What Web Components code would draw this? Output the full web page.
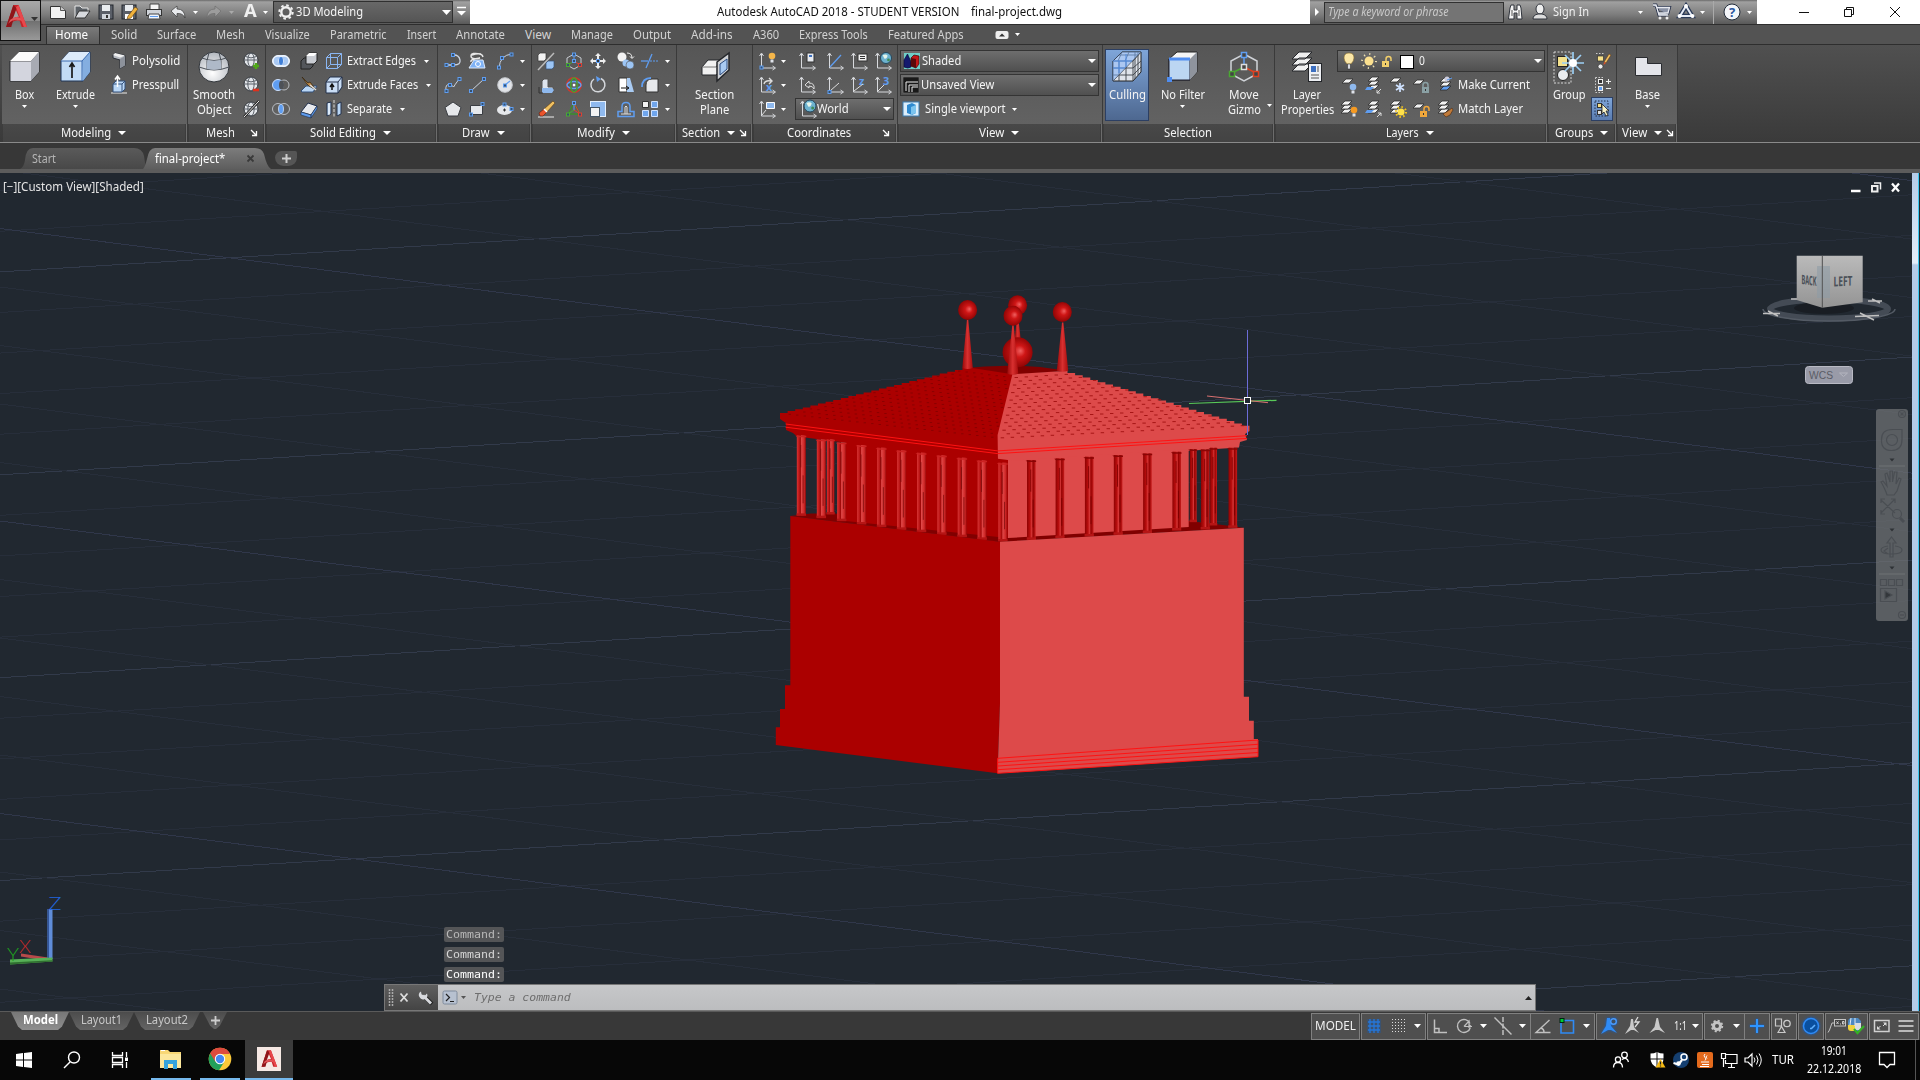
<!DOCTYPE html>
<html lang="en">
<head>
<meta charset="utf-8">
<title>Autodesk AutoCAD 2018</title>
<style>
html,body{margin:0;padding:0;background:#000;overflow:hidden}
body{width:1920px;height:1080px;font:12px/16px "Noto Sans","Open Sans",sans-serif;color:#f0f0f0}
</style>
</head>
<body>
<cad-app></cad-app>
<script>
const G='#d8dade', B='#5f9df0', L='#b9d6f5', K='#2b2f36';
const AX=`<path d="M6.500 5v14h13M4.500 7l2-3 2 3M17.500 17l3 2-3 2" fill="none" stroke="${G}"/>`;
const globe=(x,y,r)=>`<circle cx="${x}" cy="${y}" r="${r}" fill="#e3e6ea" stroke="#33373c"/><path d="M${x-r} ${y}h${2*r}M${x-r*.8} ${y-r*.5}q${r*.8} ${r*.4} ${r*1.6} 0" fill="none" stroke="#5a6068"/><ellipse cx="${x}" cy="${y}" rx="${r*.45}" ry="${r}" fill="none" stroke="#5a6068"/>`;
const earth=(x,y,r)=>`<circle cx="${x}" cy="${y}" r="${r}" fill="#6db2cf" stroke="#24455a"/><path d="M${x-r*.6} ${y-r*.5}q${r*.6} -${r*.3} ${r*.9} ${r*.1}q-${r*.2} ${r*.7} -${r*.6} ${r*.5}z" fill="#e4f4ea"/><circle cx="${x+r*.45}" cy="${y+r*.35}" r="${r*.25}" fill="#3f8b57"/>`;
const lay=(x,y,c='#f2f2f2')=>`<path d="M${x+4} ${y}h7l-4 4h-7z" fill="${c}" stroke="#2c2c2c" stroke-width=".8"/>`;
const stack=(x,y,c='#f2f2f2')=>lay(x,y+8,c)+lay(x,y+4)+lay(x,y);
const sq=(x,y,c=B)=>`<rect x="${x-1.5}" y="${y-1.5}" width="3" height="3" fill="#35506f" stroke="${c}"/>`;
const bulb=(x,y,c)=>`<circle cx="${x}" cy="${y}" r="3.300" fill="${c}"/><path d="M${x-1.5} ${y+3.500}h3v3h-3z" fill="#dfe3ea"/>`;
const lockp=(x,y,c,o=0)=>`<path d="M${x+(o?4:1)} ${y}v-2q0-2.500 2.500-2.500t2.500 2.500v2" fill="none" stroke="${c}" stroke-width="1.500"/><rect x="${x}" y="${y}" width="7" height="6" fill="${c}"/><path d="M${x+3.500} ${y+2}v2" stroke="#333"/>`;
const LOGO=`<path d="M2 22L9 1h5l8 21h-5l-2-6q-4-1-8 2l-1.500 4z" fill="#c62328"/><path d="M2 22L9 1l3 3-5 18z" fill="#8f1519"/><path d="M8.500 14q3-2 5.800-1.600L11.500 6z" fill="var(--hole,#9b9b9b)"/><path d="M4 19q7-7 16-1l-1-3Q12 10 6 15z" fill="#e0565a"/><path d="M14 1l8 21h-3L11.500 3z" fill="#e8484c"/>`;
const ICONS={
 new:`<path d="M4.500 6.500h10l5 4v8h-15z" fill="#f3f3f3" stroke="#333"/><path d="M14.500 6.500v4h5" fill="#ccc" stroke="#555"/>`,
 open:`<path d="M5 18V6h5l2 2h6v3" fill="#5d6268" stroke="#e8e8e8"/><path d="M5 18l4-7h11l-5 7z" fill="#d8dade" stroke="#333"/>`,
 save:`<rect x="5" y="5" width="14" height="14" fill="#5a5f68" stroke="#22262c"/><rect x="8" y="5" width="8" height="6" fill="#e9ecef"/><path d="M8 14h8v5H8z" fill="#cfd4da"/><path d="M13 15v3" stroke="#333" stroke-width="2"/>`,
 saveas:`<rect x="4" y="5" width="14" height="14" fill="#5a5f68" stroke="#22262c"/><rect x="7" y="5" width="8" height="6" fill="#e9ecef"/><path d="M7 14h8v5H7z" fill="#fff"/><path d="M10 16l7-9 3 2-7 9-4 1z" fill="#f0b23c" stroke="#5a3a10" stroke-width=".6"/>`,
 print:`<path d="M8 4h9v6H8z" fill="#f5f5f5" stroke="#444"/><rect x="4.500" y="9.500" width="15" height="6" fill="#d0d4da" stroke="#333"/><path d="M7 14h10l1 5H6z" fill="#eef5ff" stroke="#444"/><path d="M8 16.500h8" stroke="${B}"/>`,
 undo:`<path d="M5 11l6-5v3q8 0 8 9-2-5-8-4.500V17z" fill="#e9ebee" stroke="#3a3a3a" stroke-width=".7"/>`,
 redo:`<path d="M19 11l-6-5v3q-8 0-8 9 2-5 8-4.500V17z" fill="#9c9c9c" stroke="#6a6a6a" stroke-width=".6"/>`,
 gear:`<circle cx="12" cy="12" r="4.700" fill="none" stroke="#f0f0f0" stroke-width="2.400"/><circle cx="12" cy="12" r="6.700" fill="none" stroke="#f0f0f0" stroke-width="2" stroke-dasharray="2.600 2.660"/>`,
 over:`<path d="M8 7.500h9" stroke="#fff" stroke-width="1.500"/><path d="M8 11h9l-4.500 4.500z" fill="#fff"/>`,
 binoc:`<path d="M6 8l1-3h3v5h3V5h3l1 3 1 11h-5v-6h-3v6H4.500z" fill="#f4f4f4" stroke="#30343c"/><path d="M8 10v6M15 10v6" stroke="#555"/>`,
 user:`<ellipse cx="12" cy="9" rx="4" ry="5" fill="#eee" stroke="#30343c"/><path d="M5 19q0-4 5-5h4q5 1 5 5z" fill="#ddd" stroke="#30343c"/>`,
 cart:`<path d="M3 5h3l3 10h9M6.500 7.500h13L18 13H8" fill="#7d869b" stroke="#26304a" stroke-width="3"/><path d="M3 5h3l3 10h9M6.500 7.500h13L18 13H8" fill="#8b93a6" stroke="#e8eaf0" stroke-width="1.300"/><circle cx="10" cy="18" r="1.500" fill="#eee"/><circle cx="17" cy="18" r="1.500" fill="#eee"/>`,
 a360:`<path d="M12 6l6 10H6z" fill="none" stroke="#2a3a58" stroke-width="4.500"/><path d="M12 6l6 10H6z" fill="none" stroke="#e6ebf5" stroke-width="2"/><circle cx="12" cy="6" r="2" fill="#fff"/><circle cx="5.500" cy="16" r="2" fill="#fff"/><circle cx="18.500" cy="16" r="2" fill="#fff"/>`,
 help:`<circle cx="12" cy="12" r="8" fill="#f4f6fa" stroke="#222c3a"/><text x="12" y="16.500" font-size="13" font-weight="700" text-anchor="middle" fill="#2a57a0">?</text>`,
 min:`<path d="M7 12.500h10" stroke="#111"/>`,
 rest:`<path d="M7.500 9.500h7v7h-7zM9.500 9.500v-2h7v7h-2" fill="none" stroke="#111"/>`,
 close:`<path d="M7 7l10 10M17 7L7 17" stroke="#111"/>`,
 polysolid:`<path d="M6 6l2-2 10 2.500v10l-5 3V11L6 9z" fill="#b9bdc4" stroke="${K}"/><path d="M6 6l2-2 10 2.500-5 2z" fill="#f1f1f1"/><path d="M13 10l5-3v9.500l-5 3z" fill="#8d929b"/>`,
 presspull:`<path d="M4 20h16" stroke="#eee"/><path d="M6 11l3-3h9v8l-3 3H6z" fill="${L}" stroke="#33507a"/><path d="M6 11h9v8M15 11l3-3" fill="none" stroke="#33507a"/><path d="M10.500 14V4M8 6.500L10.500 3 13 6.500" fill="none" stroke="#fff" stroke-width="1.500"/>`,
 mplus:globe(12,11,7)+`<path d="M17 14v6M14 17h6" stroke="#4fa818" stroke-width="2.600"/>`,
 mminus:globe(12,11,7)+`<path d="M14 17h6" stroke="#e0301c" stroke-width="2.600"/>`,
 mnone:globe(12,12,7)+`<path d="M5 20L20 4" stroke="#222" stroke-width="2.500"/><path d="M5 20L20 4" stroke="#eee"/>`,
 union:`<path d="M9 6.500h6a5.500 5.500 0 0 1 0 11H9a5.500 5.500 0 0 1 0-11z" fill="#a9c9f4" stroke="#e3efff"/><circle cx="9" cy="12" r="5" fill="none" stroke="#fff"/><circle cx="15" cy="12" r="5" fill="none" stroke="#fff"/><ellipse cx="12" cy="12" rx="2" ry="4" fill="#3f7fd8"/>`,
 subtract:`<circle cx="15" cy="12" r="5" fill="none" stroke="#b8bcc2"/><circle cx="9" cy="12" r="5.500" fill="#5f9df0" stroke="#cfe2ff"/><ellipse cx="12.500" cy="12" rx="2.500" ry="4.500" fill="#4d5157"/>`,
 intersect:`<circle cx="9" cy="12" r="5.500" fill="none" stroke="#b8bcc2"/><circle cx="15" cy="12" r="5.500" fill="none" stroke="#b8bcc2"/><ellipse cx="12" cy="12" rx="2.400" ry="4.700" fill="#5f9df0" stroke="#cfe2ff" stroke-width=".6"/>`,
 sliceblk:`<path d="M4 12l3-3h9v8l-3 3H4z" fill="#53565b" stroke="#222"/><path d="M9 7l3-3h8v8l-3 3H9z" fill="#c9ccd2" stroke="#222"/><path d="M9 7h8l3-3h-8z" fill="#fff"/>`,
 slice:`<path d="M4 18l5-5h11l-4 6H5z" fill="${L}" stroke="#33507a"/><path d="M5 4l6 6 2-1 6 8-7-4-2-2z" fill="#c08a48" stroke="#3a2a12" stroke-width=".8"/><path d="M13 12l6 5" stroke="#ddd" stroke-width="1.500"/>`,
 thicken:`<path d="M4 15l7-9 9 3-6 9z" fill="#e8eaee" stroke="#22304a"/><path d="M4 15l10 3v3L4 18zM14 18l6-9v3l-6 9z" fill="${B}" stroke="#22304a" stroke-width=".6"/>`,
 xedges:`<path d="M4.500 8.500h11v11h-11zM8.500 4.500h11v11h-11zM4.500 8.500l4-4M15.500 8.500l4-4M15.500 19.500l4-4M4.500 19.500l4-4" fill="none" stroke="#8ab6f3"/>`,
 xfaces:`<path d="M4 9l4-5h12v10l-4 6H4z" fill="#c9ddf5" stroke="#22304a"/><path d="M4 9h12v11M16 9l4-5" fill="none" stroke="#22304a"/><path d="M10 17v-5M8 14l2-3 2 3" fill="none" stroke="#111" stroke-width="1.500"/>`,
 separate:`<path d="M5 6l4-1v12l-4 2zM15 7l4-2v12l-4 2z" fill="${L}" stroke="#22304a"/><path d="M7 6v12" stroke="#fff"/><path d="M12 3v18" stroke="#ddd" stroke-dasharray="3 1.500"/>`,
 polyline:`<path d="M5 16h8q7 0 6-5t-6-5" fill="none" stroke="#ccd4e0" stroke-width="1.300"/>${sq(5.500,16)}${sq(12,16)}${sq(12,6)}`,
 helix:`<path d="M16 5q-10-2-10 2t9 2q-10 1-9 4 M7 6q10-3 11 2" fill="none" stroke="#e8e8e8" stroke-width="1.400"/><path d="M4 19l5-8h9l2 8z" fill="#7fb2f5" stroke="#dce9fb"/><circle cx="13" cy="15" r="2.500" fill="none" stroke="#fff"/>`,
 arc:`<path d="M6 19Q7 6 19 5" fill="none" stroke="#ccd4e0"/>${sq(6,18.500)}${sq(9,9)}${sq(18.500,5.500)}`,
 spline:`<path d="M5 18q-1-8 4-6t4 2 6-9" fill="none" stroke="#ccd4e0"/>${sq(5.500,18)}${sq(9,12)}${sq(18.500,6)}`,
 line:`<path d="M6 18L19 6" stroke="#ccd4e0"/>${sq(6,18)}${sq(19,6)}`,
 circle:`<circle cx="12" cy="12" r="7.300" fill="#e2e4e8" stroke="#c5c8cd"/><path d="M12 12l5-4" stroke="${B}" stroke-width="1.300"/>${sq(12,12.500)}`,
 polygon:`<path d="M12 5l8 5.500-3 8.500H7l-3-8.500z" fill="#e6e8eb" stroke="#3a3d42"/>`,
 rect:`<path d="M5.500 8.500h12v9h-12z" fill="#e6e8eb" stroke="#3a3d42"/>${sq(6,17.500)}${sq(17.500,7)}`,
 ellipse:`<ellipse cx="11.500" cy="13" rx="7.500" ry="5" fill="#e6e8eb"/><path d="M10 13h3M11.500 11.500v3" stroke="#333"/>${sq(18.500,12)}${sq(11.500,7.500)}`,
 m1:`<path d="M4 21L20 4" stroke="#bbb" stroke-width="1.500"/><path d="M4 6l2-2h6v6l-2 2H4z" fill="#f2f2f2" stroke="#333" stroke-width=".7"/><path d="M12 14l2-2h6v6l-2 2h-6z" fill="#9cc5f5" stroke="#33507a" stroke-width=".7"/>`,
 m2:`<path d="M12 5l7 4v7l-7 4-7-4V9z" fill="none" stroke="#c8ccd2"/><path d="M12 12V5" stroke="${B}"/><path d="M12 12l-6 4" stroke="#4aa832"/><path d="M12 12l6 4" stroke="#e04030"/>${sq(12,5.500)}${sq(6,16,'#4aa832')}${sq(18,16,'#e04030')}${sq(12,12)}`,
 m3:`<path d="M12 4l3 3h-2v3h-2V7H9zM12 20l3-3h-2v-3h-2v3H9zM4 12l3-3v2h3v2H7v2zM20 12l-3-3v2h-3v2h3v2z" fill="#eee"/><rect x="10.500" y="10.500" width="3" height="3" fill="#333" stroke="${B}"/>`,
 m4:`<circle cx="8" cy="8" r="4.500" fill="#f2f2f2"/><circle cx="12" cy="14" r="3.500" fill="#9cc5f5"/><circle cx="16" cy="16" r="4" fill="#9cc5f5" stroke="#555" stroke-width=".6"/><path d="M13 4q5 0 5 5M16 7.500l2 2 2-2" fill="none" stroke="#eee"/>`,
 m5:`<path d="M3 12h7" stroke="${B}" stroke-width="1.300"/><path d="M12 12h9" stroke="${B}" stroke-dasharray="2 1"/><path d="M8 19l6-14" stroke="${B}" stroke-width="1.300"/>`,
 m6:`<path d="M8 8l2-2h4v8h5v5H8z" fill="#dfe5ee" stroke="#555"/><path d="M8 15h10l2 2-2 3H8z" fill="#8fb9ee"/><path d="M5 14v6h4" fill="none" stroke="#333"/>`,
 m7:`<circle cx="12" cy="12" r="7.300" fill="none" stroke="#d0382c" stroke-width="1.500"/><ellipse cx="12" cy="12" rx="7" ry="3.500" fill="none" stroke="${B}" stroke-width="1.500"/><ellipse cx="12" cy="12" rx="3.300" ry="7" fill="none" stroke="#46a02e" stroke-width="1.500"/><rect x="10.800" y="10.800" width="2.500" height="2.500" fill="#fff"/>`,
 m8:`<path d="M15 5.500A7 7 0 1 1 8 6" fill="none" stroke="#d5d8dc" stroke-width="1.500"/><path d="M10 3l5 3-4 3z" fill="${B}"/>`,
 m9:`<path d="M5 5h8v14H5z" fill="#fff" stroke="#333"/><path d="M13 5h3l4 14h-7z" fill="#a9cbf3"/><path d="M7 15h7M12 13l3 2-3 2" stroke="#111" fill="none"/>`,
 m10:`<path d="M8 19v-7q0-6 6-6h6v13z" fill="#e6e8eb" stroke="#333"/><path d="M4 14q0-9 9-9" fill="none" stroke="${B}" stroke-width="1.800"/>`,
 m11:`<path d="M4 20h16" stroke="#eee"/><path d="M10 12l9-8 2 2-8 9z" fill="#f0c060" stroke="#5a3a10" stroke-width=".6"/><path d="M5 16l5-4 3 3-4 4H6z" fill="#e9542c" stroke="#5a2010" stroke-width=".6"/><path d="M10 12l3 3" stroke="#fff" stroke-width="1.500"/>`,
 m12:`<path d="M12 6l-6 11h12z" fill="none" stroke="#3a8f2a" stroke-width="1.300"/><path d="M12 13v-7" stroke="${B}"/><path d="M12 6l6 11M12 13l6 4" stroke="#e04030"/><path d="M12 13l-6 4" stroke="#4aa832"/>${sq(12,6)}${sq(6,17.500,'#4aa832')}${sq(18,17.500,'#e04030')}`,
 m13:`<rect x="4.500" y="4.500" width="15" height="15" fill="#8fb9ee" stroke="#e4effc"/><rect x="4.500" y="10.500" width="9" height="9" fill="#f2f2f2" stroke="#456"/>`,
 m14:`<path d="M4 19.500h16v-5h-4v-5q0-4-4-4t-4 4v5H4z" fill="none" stroke="${B}" stroke-width="1.500"/><path d="M7 17h10M11 17v-7q1-2 2 0v7" fill="none" stroke="#ddd"/>`,
 m15:`<path d="M4.500 4.500h6v6h-6z" fill="#f2f2f2" stroke="#333"/><path d="M13.500 4.500h6v6h-6zM4.500 13.500h6v6h-6zM13.500 13.500h6v6h-6z" fill="#6fa5ec" stroke="#cfe2ff"/>`,
 c1:AX+`${sq(6.500,18.500)}`+bulb(17,7,'#f5b64a'), c2:AX+`<path d="M9 11q1-4 7-3M14 5l3 3-3 3" fill="none" stroke="#ddd" stroke-width="1.400"/><text x="11" y="18" font-size="11" font-weight="700" fill="${B}">x</text>`,
 c3:AX+`<path d="M11.500 5.500h8v6h-8z" fill="#8fb9ee" stroke="#fff"/><path d="M7 18l4-5" stroke="#ddd"/>`,
 c4:AX+`<rect x="12" y="4" width="7" height="9" fill="#e8ebf0" stroke="#333"/><path d="M14 6h3v2h-3z" fill="#3c6fc0"/>`,
 c5:AX+`<path d="M7 18L18 6" stroke="${B}" stroke-width="1.300"/>`,
 c6:AX+`<rect x="11" y="5" width="9" height="7" fill="#f2f2f2" stroke="#333"/><path d="M13 7.500h5M13 9.500h5" stroke="#333"/>`,
 c7:AX+earth(15,9,5.500),
 c8:AX+`<path d="M10 12l4-4v2q6 0 5 6-1-3-5-3v2z" fill="none" stroke="#ddd"/>`,
 c9:AX+`<path d="M7 18l9-8" stroke="#ddd"/>${sq(6.500,19)}`,
 c10:AX+`<text x="12" y="12" font-size="11" font-weight="700" fill="${B}">z</text><path d="M7 18l9-7" stroke="#ddd"/>`,
 c11:AX+`<text x="12" y="12" font-size="11" font-weight="700" fill="${B}">3</text><path d="M7 18l6-6" stroke="#ddd"/>`,
 world:AX+earth(14,9,6),
 shaded:`<rect x="4" y="4" width="16" height="16" fill="#6fcfc8"/><path d="M4 18V11L7.500 5l3.500 8v5q-3 2-7 0z" fill="#141a6e" stroke="#0a0d3a" stroke-width=".7"/><path d="M11 9l3-3 5 1v8l-3 4-5-2z" fill="#c41818" stroke="#3a0606" stroke-width=".7"/><path d="M11 9l5 1v9l-5-2z" fill="#5a0a0a"/>`,
 unsaved:`<rect x="4" y="4" width="16" height="16" fill="#191919" stroke="#777" stroke-width=".6"/><path d="M7 18V9h12M10 19v-7h9M13 14h6M13 19v-5" fill="none" stroke="#eee"/>`,
 viewport:`<rect x="4" y="5" width="16" height="14" fill="#dceefb" stroke="#3d7fb4"/><path d="M8 8l5-2 4 2v8l-4 2-5-2z" fill="#2e8ad0"/><path d="M12 10l5-2v8l-5 2z" fill="#7cc4ee"/>`,
 bulb:`<path d="M12 4q5 0 5 5 0 3-3 6h-4q-3-3-3-6 0-5 5-5z" fill="#fbe7a8" stroke="#8a6d2a" stroke-width=".6"/><path d="M10.500 15h3v5h-3z" fill="#d9dbe0" stroke="#333" stroke-width=".6"/>`,
 sun:`<circle cx="12" cy="12" r="4.500" fill="#fbe08f"/><circle cx="12" cy="12" r="7" fill="none" stroke="#ecdfb0" stroke-width="2" stroke-dasharray="1.200 4.300"/>`,
 unlock:lockp(6,12,'#f2cf6b',1),
 white:`<rect x="5.500" y="6.500" width="13" height="13" fill="#fff" stroke="#000"/>`,
 l1:lay(5,6)+bulb(16,14,'#8fb9ee'), l2:stack(7,4)+`<path d="M6 14h7l-3 3H4z" fill="${B}"/><path d="M20 16l-4 4M16 17v3h3" fill="none" stroke="#ddd"/>`,
 l3:lay(5,5)+`<path d="M15 10v9M11 12l8 5M19 12l-8 5" stroke="#cfe2ff" stroke-width="1.700"/>`,
 l4:lay(4,7)+lockp(13,14,'#8aa0a4'),
 l5:stack(7,5,B)+`<circle cx="14" cy="6" r="2.500" fill="#ccd"/><path d="M14 7l5-2" stroke="${B}"/>`,
 l6:stack(4,4)+bulb(17,13,'#f59a23'), l7:stack(7,4)+`<path d="M6 13h7l-3 3H4z" fill="${B}"/><path d="M16 20l4-4M17 16h3v3" fill="none" stroke="#ddd"/>`,
 l8:stack(5,4)+`<circle cx="16" cy="15" r="3.500" fill="#ffe14a"/><circle cx="16" cy="15" r="5" fill="none" stroke="#f5c518" stroke-width="2" stroke-dasharray="1.500 2.400"/>`,
 l9:lay(4,7)+lockp(11,14,'#f2a83b',1), l10:stack(5,4)+`<path d="M10 17l5-3 4-3 1 2-3 5-4 2z" fill="#c07a3a" stroke="#4a2a10" stroke-width=".6"/>`,
 g1:`<path d="M6 4.500h9" stroke="#ccc" stroke-dasharray="1.500 1.500"/><rect x="7.500" y="7" width="6" height="5" fill="#f5e08a" stroke="#333" stroke-width=".7"/><circle cx="10.500" cy="17.500" r="2.500" fill="#eee" stroke="#333" stroke-width=".7"/><path d="M14 13l5-8 2 1-5 8z" fill="#f0c060" stroke="#5a3010" stroke-width=".5"/><path d="M14 13l-.5 3 2.500-2z" fill="#e0502a"/>`,
 g2:`<path d="M5.500 4.500h9M5.500 4.500v15h9" fill="none" stroke="#ccc" stroke-dasharray="1.500 1.500"/><rect x="8.500" y="6.500" width="4" height="4" fill="#333" stroke="#eee"/><rect x="8.500" y="13.500" width="4" height="4" fill="#5f9df0" stroke="#eee"/><path d="M16 8.500h5M18.500 6v5M16 15.500h5" stroke="#eee"/>`,
 g3:`<rect x="5" y="4" width="13" height="15" fill="none" stroke="#222f48" stroke-dasharray="1.500 1.500"/><rect x="7.500" y="6.500" width="4" height="4" fill="#f5e08a" stroke="#333"/><rect x="7.500" y="13.500" width="4" height="4" fill="#ddd" stroke="#333"/><path d="M12 7l7 7h-3l2 4-2 1-2-4-2 2z" fill="#f6f2c8" stroke="#222" stroke-width=".8"/>`,
 ribtog:`<rect x="5.500" y="8" width="13" height="8" rx="2" fill="#eee"/><path d="M9 13.500l3-3 3 3z" fill="#333"/>`,
 launch:`<path d="M9 9l5 5M14.500 10v4.500H10" fill="none" stroke="#fff" stroke-width="1.300"/>`,
 s1:`<path d="M8 5v14M12 5v14M16 5v14M6 8h12M6 12h12M6 16h12" stroke="#2f86f0" stroke-width="1.300"/><rect x="5" y="5" width="14" height="14" fill="#1458b0" opacity=".35"/>`,
 s2:`<path d="M6 5.500h13M6 8.500h13M6 11.500h13M6 14.500h13M6 17.500h13" stroke="#ddd" stroke-dasharray="1 2"/>`,
 s3:`<path d="M6.500 5.500v13H19M6.500 14.500h4.500v4" fill="none" stroke="#c0c0c0" stroke-width="1.500"/>`,
 s4:`<path d="M18 9.500A6.500 6.500 0 1 0 18.300 13.500" fill="none" stroke="#c0c0c0" stroke-width="1.400"/><path d="M12 12.500h8M12 12.500l5-5.500V14M16.500 10l2.500 2.500" stroke="#c0c0c0" fill="none" stroke-width="1.200"/>`,
 s5:`<path d="M3.500 3.500l17 17" stroke="#c0c0c0" stroke-width="1.500"/><path d="M12 3v18" stroke="#c0c0c0" stroke-width="1.500" stroke-dasharray="5 1.500"/>`,
 s6:`<path d="M18.500 6L5 18.500h14.500M10 14q3 1 3 4" fill="none" stroke="#c0c0c0" stroke-width="1.400"/>`,
 s7:`<path d="M9 6.500h9.500v12.500h-12.500V9" fill="none" stroke="#2f8bf5" stroke-width="1.600"/><rect x="5" y="4.500" width="4" height="4" fill="#0c3" stroke="#021"/>`,
 s8:`<g style="filter:drop-shadow(0 0 1.500px #0a5fd0)"><path d="M10 4h3l1 8 6 7-6-3h-3l-7 4 5-8z" fill="#2f8bf5"/><circle cx="16.500" cy="7.500" r="2.800" fill="#3c4d62" stroke="#4a9cff" stroke-width="1.400"/></g>`,
 s9:`<path d="M10 5h2l1 8 5 6-5-3h-3l-6 4 5-8z" fill="#c9c9c9"/><path d="M17 3l-3 5h4l-4 5" fill="none" stroke="#ddd" stroke-width="1.300"/>`,
 s10:`<path d="M11.500 4h1.500l2 9 5 6-6-3h-3.500l-6 3 5-6z" fill="#c9c9c9"/>`,
 s11:`<circle cx="12" cy="12" r="3.500" fill="none" stroke="#c4c4c4" stroke-width="3"/><circle cx="12" cy="12" r="5.300" fill="none" stroke="#c4c4c4" stroke-width="1.800" stroke-dasharray="2.100 2.060"/>`,
 s12:`<path d="M12 5v14M5 12h14" stroke="#2f95ff" stroke-width="2" style="filter:drop-shadow(0 0 1px #0a5fd0)"/>`,
 s13:`<path d="M4.500 5h6v7h-6zM7 18.500l3.500-6 3.500 6z" fill="none" stroke="#c9c9c9" stroke-width="1.200"/><circle cx="16" cy="9.500" r="3.200" fill="#4f4f4f" stroke="#c9c9c9" stroke-width="1.300"/>`,
 s14:`<circle cx="12" cy="12" r="7.500" fill="#0a4f9e" stroke="#2f8bf5" stroke-width="1.500" style="filter:drop-shadow(0 0 1.500px #0a5fd0)"/><path d="M11 14.500h1.500l3.500-3.500" fill="none" stroke="#5fb0ff" stroke-width="1.600"/>`,
 s15:`<rect x="9.500" y="5.500" width="11" height="6.500" fill="#444" stroke="#c4c4c4"/><path d="M11.500 7.500l2 2.500M13.500 7.500l-2 2.500M15 10h1M17.500 7.500h1.500v2.500h-1.500z" stroke="#ddd" fill="none" stroke-width=".9"/><path d="M9 9H7l-2.500 7L3 18.500" stroke="#c4c4c4" fill="none"/>`,
 s16:`<path d="M4 10h7l1 7H7q-3 0-3-3z" fill="#f0d23c"/><path d="M4 8q0-4 4-4h6l3 3v10h-6v-6H4z" fill="#4d88c0"/><path d="M7 4l-1 7M11 4v8" stroke="#dfe9f5"/><path d="M11 9h6v7h-6z" fill="#d7dce2"/><path d="M10 15l3.500 4 6.500-7" fill="none" stroke="#35b025" stroke-width="2.300"/>`,
 s17:`<rect x="4.500" y="6.500" width="14.500" height="11" fill="none" stroke="#d0d0d0" stroke-width="1.500"/><path d="M7 12v3.500h3.500zM16.500 12V8.500H13z" fill="#ddd"/><path d="M8 14.500l2.500-2.500M15.500 9.500L13 12" stroke="#ddd"/>`,
 s18:`<path d="M4.500 7h15M4.500 12h15M4.500 17h15" stroke="#ddd" stroke-width="1.500"/>`,
 win:`<path d="M4 6l7-1v6.500H4zM12 4.900L20 4v7.500h-8zM4 12.500h7V19l-7-1zM12 12.500h8V20l-8-1.100z" fill="#fff"/>`,
 search:`<circle cx="14" cy="9.500" r="5.500" fill="none" stroke="#fff" stroke-width="1.400"/><path d="M10 14l-6 6" stroke="#fff" stroke-width="1.500"/>`,
 task:`<path d="M4.500 4v3.500h10V4M4.500 20v-3.500h10V20M4.500 9.500h10v5h-10zM18.500 4v5M18.500 14v6" fill="none" stroke="#fff" stroke-width="1.300"/><rect x="17" y="9.500" width="3" height="3.500" fill="#fff"/>`,
 java:`<rect x="4" y="4" width="16" height="16" rx="2" fill="#e46a1c"/><path d="M12 6q-2 2 0 3.500t0 3M14 7.500q-2 1.500 0 3M8 14h8M9 16.500h7M7 18.500h9" stroke="#fff" fill="none"/>`,
 shield:`<path d="M12 4q3 1.500 6.500 1.500v5q0 6-6.500 9-6.500-3-6.500-9v-5q3.500 0 6.500-1.500z" fill="#fff"/><path d="M12 4v16M5 11h14" stroke="#111"/><path d="M15.500 11l5 8.500h-10z" fill="#f5b912"/><path d="M15.500 13.500v3M15.500 17.500v1" stroke="#222" stroke-width="1.200"/>`,
 steam:`<circle cx="12" cy="12" r="8" fill="#153f70"/><path d="M4.500 15l5 1.500L13 12" stroke="#fff" stroke-width="2.200" fill="none"/><circle cx="15" cy="9" r="3" fill="#153f70" stroke="#fff" stroke-width="1.500"/><circle cx="9.500" cy="15.500" r="2.300" fill="#fff"/>`,
 net:`<path d="M9 6.500h11v9H8.500V12M14.500 15.500v4M11 19.500h7M4.500 5.500h4v5h-4zM6.500 10.500V19" fill="none" stroke="#fff" stroke-width="1.200"/>`,
 vol:`<path d="M4 10h3l4-4v12l-4-4H4z" fill="none" stroke="#fff" stroke-width="1.200"/><path d="M13 9.500q2 2.500 0 5M15.500 7.500q3 4.500 0 9M18 5.500q4.500 6.500 0 13" fill="none" stroke="#fff"/>`,
 people:`<circle cx="15.500" cy="7" r="2.800" fill="none" stroke="#fff" stroke-width="1.300"/><path d="M13 11.500q5-3 6.500 2.500M4.500 19.500q0-5 4.500-5t4.500 5" fill="none" stroke="#fff" stroke-width="1.300"/><circle cx="9" cy="11.500" r="2.600" fill="none" stroke="#fff" stroke-width="1.300"/>`,
 notif:`<path d="M4.500 4.500h15v12h-4.500L12 19.500l-3-3H4.500z" fill="none" stroke="#fff" stroke-width="1.300"/>`,
};
/* large ribbon icons, 34 x 34 */
const BIG={
 box:`<path d="M2 11L11 2h20v20l-8 9H2z" fill="url(#a)" stroke="#24262a"/><path d="M2 11L11 2h20l-8 9z" fill="#fbfbfb"/><path d="M23 11l8-9v20l-8 9z" fill="#a7aab3"/><path d="M2.500 11.500H23V31H2.500z" fill="#d3d5de"/>`,
 extrude:`<path d="M2 11L10 2h21v20l-7 9H2z" fill="#c2dbf6" stroke="#1f3557"/><path d="M2 11l8-9h21l-8 9z" fill="#dcebfb"/><path d="M23 11l8-9v20l-7 9z" fill="#84aee0"/><path d="M2 11h21v20M23 11l8-9" fill="none" stroke="#3a6bb0"/><path d="M13 28V14M10.500 17l2.500-4 2.500 4" fill="none" stroke="#1a1a1a" stroke-width="1.700"/>`,
 smooth:`<defs><radialGradient id="s" cx=".45" cy=".7" r=".7"><stop offset="0" stop-color="#fff"/><stop offset="1" stop-color="#b3b8bf"/></radialGradient></defs><circle cx="17" cy="17" r="15" fill="url(#s)" stroke="#33373c"/><path d="M2 17q15 6 30 0M5 8q12 5 24 0M12 2.500q-3 8-2 17M22 2.500q3 8 2 17" fill="none" stroke="#4a5058"/><path d="M10.500 10q6.500 1.500 13 0 1 5 .500 9-7 1.500-14 0-.500-5 .500-9z" fill="#aeb9c8"/>`,
 section:`<path d="M4 17l6-7h12v11l-4 4H4z" fill="#f1f1f1" stroke="#24262a"/><path d="M4 17h14l4-5" fill="none" stroke="#777"/><path d="M19 12l12-9v17L19 31z" fill="#cfd2d6" stroke="#24262a" stroke-width="1.500"/><path d="M22 14l7-5v10l-7 6z" fill="#a9cbf3" stroke="#2c4c80"/>`,
 culling:`<path d="M3 11L12 2h19v20l-8 9H3z" fill="#dfe3ea" stroke="#222"/><path d="M3 11h20v20M23 11l8-9M3 18h20l8-7M3 25h20l8-8M9 11v20M16 11v20M9 5h19M12 2l-4 9M19 2l-4 9M25 2v27M28 2v23M3 31L31 2" fill="none" stroke="#3b3f46" stroke-width=".9"/><path d="M3 11L12 2h19L3 31z" fill="#7fb0f5" fill-opacity=".55"/><path d="M3 18h12M3 11h19M9 11v12M16 4v13" stroke="#4f8ae0" fill="none"/>`,
 nofilter:`<path d="M3 9L11 2h20v20l-7 8H3z" fill="#f4f4f4" stroke="#222"/><path d="M3 9h21v21H3z" fill="#bcd6f2" stroke="#223"/><path d="M24 9l7-7v20l-7 8z" fill="#8f949d"/><path d="M3 7.500h21v3H3z" fill="#4f8df0"/><rect x="1" y="27" width="5" height="5" fill="#4f8df0"/>`,
 gizmo:`<path d="M17 4l13 7v13l-13 7-13-7V11z" fill="none" stroke="#d0d3d8" stroke-width="1.500"/><path d="M17 17V5" stroke="${B}" stroke-width="1.500"/><path d="M17 17L5 23" stroke="#4aa832" stroke-width="1.500"/><path d="M17 17l12 6" stroke="#e04020" stroke-width="1.500"/><g fill="#444" stroke-width="1.500"><rect x="14.500" y="2.500" width="5" height="5" stroke="${B}"/><rect x="2.500" y="21.500" width="5" height="5" stroke="#4aa832"/><rect x="26.500" y="21.500" width="5" height="5" stroke="#e04020"/><rect x="14.500" y="14.500" width="5" height="5" stroke="#ddd"/></g>`,
 layerp:`<path d="M9 2h13l-7 7H2zM9 8h13l-7 7H2zM9 14h13l-7 7H2z" fill="#f0f0f0" stroke="#24262a"/><rect x="18.500" y="13.500" width="13" height="18" fill="#eef0f4" stroke="#24262a"/><rect x="21" y="16" width="5" height="6" fill="#3c6fc0"/><path d="M28 16v6M21 25h8M21 28h8" stroke="#555"/>`,
 group:`<rect x="2" y="2" width="17" height="31" fill="none" stroke="#d8d8d8" stroke-dasharray="2 1.500"/><rect x="5.500" y="6.500" width="10" height="10" fill="#f3e18d" stroke="#222"/><circle cx="11" cy="25" r="5.500" fill="#e9ecef" stroke="#222"/><path d="M21 2v22M10 13h22M13 5l16 16M29 5L13 21" stroke="#9ccff5" stroke-width="1.700"/><circle cx="21" cy="13" r="4" fill="#fff"/>`,
 base:`<path d="M4.500 25.500V7.500h12v6h14v12z" fill="#e4e5ea" stroke="#2a2c30"/>`
};
const reg=(n,html,cb)=>customElements.define(n,class extends HTMLElement{constructor(){super();this.attachShadow({mode:'open'})}
 connectedCallback(){if(this.done)return;this.done=1;this.shadowRoot.innerHTML=typeof html==='function'?html(this):html;cb&&cb(this)}});
const a=(e,k,d='')=>e.getAttribute(k)??d;
/* flow-row helpers: every item names where it starts, the row turns that into margins */
const I=(n,c,w=24)=>({l:c-w/2,w,h:`<ui-icon n="${n}"></ui-icon>`});
const T=(t,l,w,s='')=>({l,w,h:`<ui-text w="${w}" style="${s}">${t}</ui-text>`});
const A=(c,s=5,col='#fff')=>({l:c-5,w:10,h:`<ui-arrow s="${s}" c="${col}"></ui-arrow>`});
const X=(l,w,h)=>({l,w,h});
const row=(x,items,cls='')=>`<div class="row ${cls}">`+items.map(i=>{const m=i.l-x;x=i.l+i.w;return `<span class="c" style="margin-left:${m}px;width:${i.w}px">${i.h}</span>`}).join('')+'</div>';
const ROW=`.row{display:flex;align-items:center;height:24px}.c{flex:none;display:flex;align-items:center;justify-content:center}`;

const P=(t,x0,x1,arrow,launch,body)=>`<rb-panel t="${t[0]}" tw="${t[1]}" w="${x1-x0}" arrow="${arrow}" launch="${launch}">${body}</rb-panel>`;
const bigb=(n,w,l1,w1,l2='',w2=0,arrow=0,ml=0)=>`<big-btn n="${n}" style="width:${w}px;margin-left:${ml}px" l1="${l1}" w1="${w1}" l2="${l2}" w2="${w2}" arrow="${arrow}"></big-btn>`;
const rows=(x,...r)=>`<div>${r.map(i=>row(x,i)).join('')}</div>`;

reg('cad-app',`<style>:host{display:flex;flex-direction:column;width:1920px;height:1080px;position:relative}
cad-logo{position:absolute;left:0;top:0}</style>
<cad-title></cad-title><cad-tabs></cad-tabs><cad-ribbon></cad-ribbon><doc-tabs></doc-tabs><cad-view></cad-view><cad-status></cad-status><win-taskbar></win-taskbar><cad-logo></cad-logo>`);
reg('cad-logo',`<style>:host{display:flex;width:39px;height:39px;border:1px solid #111;background:linear-gradient(#a8a8a8,#8d8d8d 50%,#707070 51%,#999);--hole:#a0a0a0;align-items:flex-start}
svg{margin:3px 0 0 3px;width:25px;height:25px}ui-arrow{flex:none;width:9px}ui-arrow{margin:16px 0 0 1px}</style><svg viewBox="0 0 24 24">${LOGO}</svg><ui-arrow s="7" c="#333"></ui-arrow>`);
reg('cad-title',`<style>:host{display:flex;height:24px;background:#fff}${ROW}
.qat{width:470px;background:linear-gradient(#6b6b6b,#a0a0a0 8%,#7d7d7d 60%,#595959)}
.ws{display:flex;align-items:center;width:178px;height:20px;border:1px solid #303030;background:linear-gradient(#686868,#555);color:#f5f5f5}
.ws ui-text{flex:none;margin-left:-2px}.ws ui-arrow{margin-left:auto;margin-right:1px}
.mid{width:840px;color:#111}.right{width:447px;background:linear-gradient(#6b6b6b,#a0a0a0 8%,#7d7d7d 60%,#595959)}
.q{border:1px solid #303030;background:#747474;color:#c9c9c9;font-style:italic;display:flex;align-items:center;padding-left:3px;box-sizing:border-box;width:180px;height:21px}</style>
<div class="qat">${row(0,[I('new',58),I('open',82),I('save',106),I('saveas',130),I('print',154),I('undo',178,22),A(195,5),I('redo',214,22),A(231,5,'#aaa'),X(243,14,'<ui-text w="13" style="font-size:17px;font-weight:700;margin-top:-2px">A</ui-text>'),A(265,5),X(273,180,`<span class="ws"><ui-icon n="gear"></ui-icon><ui-text w="67">3D Modeling</ui-text><ui-arrow s="9"></ui-arrow></span>`),I('over',460.5,16)])}</div>
<div class="mid">${row(470,[T('Autodesk AutoCAD 2018 - STUDENT VERSION',717,242),T('final-project.dwg',971,91)])}</div>
<div class="right">${row(1310,[X(1310,13,'<svg width="13" height="12"><path d="M5 2l4 4-4 4z" fill="#fff"/></svg>'),X(1324,180,'<span class="q"><ui-text w="121">Type a keyword or phrase</ui-text></span>'),I('binoc',1516),I('user',1540,22),T('Sign In',1553,36),A(1640),I('cart',1662,22),I('a360',1686,22),A(1702),X(1713,1,'<i style="width:1px;height:23px;background:#aaa"></i>'),I('help',1732,22),A(1749)])}</div>
${row(1757,[I('min',1804),I('rest',1849),I('close',1895)])}`);
const TABS=[['Solid',26],['Surface',39],['Mesh',29],['Visualize',45],['Parametric',57],['Insert',29],['Annotate',49],['View',26],['Manage',42],['Output',38],['Add-ins',42],['A360',26],['Express Tools',69],['Featured Apps',76]];
reg('cad-tabs',`<style>:host{display:flex;height:21px;background:#535353;border-top:1px solid #2e2e2e;border-bottom:1px solid #2e2e2e;box-sizing:border-box;color:#d2d2d2;align-items:center;padding-left:46px}
.t{padding:0 10px}.on{height:18px;margin-top:1px;box-sizing:border-box;border:1px solid #2e2e2e;border-bottom:0;background:linear-gradient(#7a7a7a,#5e5e5e);color:#fff;padding:0 9px 0 8px;width:54px;display:flex;align-items:center;margin-right:1px}.on ui-text{margin-top:-2px}</style>
<span class="on"><ui-text w="33">Home</ui-text></span>${TABS.map(t=>`<span class="t"><ui-text w="${t[1]}">${t[0]}</ui-text></span>`).join('')}<ui-icon n="ribtog" style="margin-left:16px"></ui-icon><ui-arrow style="margin-left:-2px"></ui-arrow>`);
reg('rb-panel',e=>`<style>:host{display:flex;flex-direction:column;flex:none;box-sizing:border-box;width:${a(e,'w')}px;border-right:1px solid #3a3a3a;box-shadow:inset -1px 0 #6c6c6c}
.b{display:flex;height:75px;padding-top:4px;background:linear-gradient(#565656,#626262)}
.f{display:flex;height:18px;align-items:center;background:linear-gradient(#484848,#434343);margin:0 2px 0 1px}
.m{flex:1;display:flex;align-items:center;justify-content:center;gap:6px}.l .m{padding-left:4px}ui-icon{width:14px;margin-right:2px}</style>
<div class="b"><slot></slot></div><div class="f ${a(e,'launch')==1?'l':''}"><span class="m"><ui-text w="${a(e,'tw')}">${a(e,'t')}</ui-text>${a(e,'arrow')==1?'<ui-arrow s="8"></ui-arrow>':''}</span>${a(e,'launch')==1?'<ui-icon n="launch"></ui-icon>':''}</div>`);
reg('big-btn',e=>`<style>:host{display:flex;flex:none;flex-direction:column;align-items:center;height:72px}svg{display:block;margin-top:1px;width:34px;height:34px}
ui-text{margin-top:3px}ui-text+ui-text{margin-top:-1px}ui-arrow{margin-top:-1px;height:8px}:host([sel]){background:linear-gradient(#7fa6da,#4d678f);outline:1px solid #2c3f63;outline-offset:-1px}</style>
<svg viewBox="0 0 34 34">${BIG[a(e,'n')]}</svg><ui-text w="${a(e,'w1')}">${a(e,'l1')}</ui-text>${a(e,'l2')?`<ui-text w="${a(e,'w2')}">${a(e,'l2')}</ui-text>`:''}${a(e,'arrow')==1?'<ui-arrow></ui-arrow>':''}`);
reg('ui-combo',e=>`<style>:host{display:flex;flex:none;align-items:center;box-sizing:border-box;height:22px;width:${a(e,'w')}px;border:1px solid #343434;background:linear-gradient(#6e6e6e,#505050);color:#f4f4f4}
ui-arrow{margin-left:auto;margin-right:1px}</style><slot></slot><ui-arrow s="8"></ui-arrow>`);
reg('cad-ribbon',`<style>:host{display:flex;height:98px;background:linear-gradient(#505050,#3a3a3a);border-bottom:1px solid #8a8a8a;box-sizing:border-box;padding-left:2px;color:#f4f4f4}${ROW}
.sel{width:20px;height:22px;display:flex;align-items:center;justify-content:center;background:linear-gradient(#7fa6da,#5a7cb0);outline:1px solid #2c3f63}</style>
${P(['Modeling',50],2,188,1,0,bigb('box',45,'Box',19,'',0,1)+bigb('extrude',57,'Extrude',39,'',0,1)+rows(104,[I('polysolid',119),T('Polysolid',132,48)],[I('presspull',119),T('Presspull',132,47)]))}
${P(['Mesh',29],188,266,0,1,bigb('smooth',52,'Smooth',42,'Object',35)+rows(240,[I('mplus',251)],[I('mminus',251)],[I('mnone',251)]))}
${P(['Solid Editing',66],266,438,1,0,rows(266,[I('union',281),I('sliceblk',309),I('xedges',334),T('Extract Edges',347,69),A(426)],[I('subtract',281),I('slice',309),I('xfaces',334),T('Extrude Faces',347,71),A(428)],[I('intersect',281),I('thicken',309),I('separate',334),T('Separate',347,45),A(402)]))}
${P(['Draw',28],438,532,1,0,rows(438,[I('polyline',453),I('helix',477),I('arc',505),A(522)],[I('spline',453),I('line',477),I('circle',505),A(522)],[I('polygon',453),I('rect',477),I('ellipse',505),A(522)]))}
${P(['Modify',38],532,677,1,0,rows(532,[I('m1',546),I('m2',573.5),I('m3',598),I('m4',626),I('m5',650),A(667)],[I('m6',546),I('m7',573.5),I('m8',598),I('m9',626),I('m10',650),A(667)],[I('m11',546),I('m12',573.5),I('m13',598),I('m14',626),I('m15',650),A(667)]))}
${P(['Section',38],677,753,1,1,bigb('section',75,'Section',39,'Plane',29))}
${P(['Coordinates',64],753,898,0,1,rows(753,[I('c1',767),A(783),I('c4',807),I('c5',835),I('c6',859),I('c7',883)],[I('c2',767),A(783),I('c8',807),I('c9',835),I('c10',859),I('c11',883)],[I('c3',767),A(783),X(795,99,'<ui-combo w="99"><ui-icon n="world"></ui-icon><ui-text w="32" style="margin-left:-3px">World</ui-text></ui-combo>')]))}
${P(['View',25],898,1103,1,0,rows(898,[X(900,199,'<ui-combo w="199"><ui-icon n="shaded" style="width:21px"></ui-icon><ui-text w="39">Shaded</ui-text></ui-combo>')],[X(900,199,'<ui-combo w="199"><ui-icon n="unsaved" style="width:20px"></ui-icon><ui-text w="73">Unsaved View</ui-text></ui-combo>')],[I('viewport',911,22),T('Single viewport',925,81),A(1014)]))}
${P(['Selection',48],1103,1275,0,0,bigb('culling',44,'Culling',37,'',0,0,2).replace('<big-btn','<big-btn sel')+bigb('nofilter',69,'No Filter',44,'',0,1,-1)+bigb('gizmo',44,'Move',30,'Gizmo',33,0,5)+`<span style="display:flex;padding-top:52px;height:8px;margin-left:-2px"><ui-arrow></ui-arrow></span>`)}
${P(['Layers',33],1275,1548,1,0,bigb('layerp',62,'Layer',28,'Properties',53,0,1)+rows(1338,[X(1337,208,'<ui-combo w="208"><ui-icon n="bulb" style="width:22px"></ui-icon><ui-icon n="sun" style="width:18px"></ui-icon><ui-icon n="unlock" style="width:19px"></ui-icon><ui-icon n="white" style="width:20px"></ui-icon><ui-text w="6" style="margin-left:2px">0</ui-text></ui-combo>')],[I('l1',1349),I('l2',1373),I('l3',1397),I('l4',1421),I('l5',1445),T('Make Current',1458,72)],[I('l6',1349),I('l7',1373),I('l8',1397),I('l9',1421),I('l10',1445),T('Match Layer',1458,65)]))}
${P(['Groups',38],1548,1617,1,0,bigb('group',42,'Group',33)+rows(1590,[I('g1',1602)],[I('g2',1602)],[X(1590,23,'<span class="sel"><ui-icon n="g3"></ui-icon></span>')]))}
${P(['View',25],1617,1678,1,1,bigb('base',61,'Base',25,'',0,1))}`);
reg('doc-tabs',`<style>:host{display:flex;height:30px;box-sizing:border-box;background:#373737;border-bottom:4px solid #5c5c5c;padding:5px 0 0 20px;align-items:flex-end}
.t{height:21px;display:flex;align-items:center;box-sizing:border-box;flex:none}
.s{width:126px;background:linear-gradient(#5a5a5a,#484848);color:#b5b5b5;padding-left:12px;clip-path:path("M0 21Q4 19 5 12Q6 0 13 0H114Q122 0 124 8L126 21z")}.o{width:128px;margin-left:-3px;background:linear-gradient(#7c7c7c,#5e5e5e);color:#fff;padding-left:12px;clip-path:path("M0 21Q2 19 4 11Q6 0 12 0H112Q119 0 121 6Q124 19 128 21z")}
.o svg{margin-left:21px}.p{width:22px;height:15px;margin:0 0 3px 4px;background:#555;border-radius:7px 2px 9px 9px;display:flex;align-items:center;justify-content:center}</style>
<span class="t s"><ui-text w="24">Start</ui-text></span><span class="t o"><ui-text w="70">final-project*</ui-text><svg width="10" height="10"><path d="M1.500 1.500l6 6M7.500 1.500l-6 6" stroke="#3a3a3a" stroke-width="1.800"/></svg></span><span class="p"><svg width="9" height="9"><path d="M4.500 0v9M0 4.500h9" stroke="#ccc" stroke-width="2"/></svg></span>`);

function scene(){
 let s='<g shape-rendering="crispEdges">';
 for(let k=-3;k<26;k++){const y=271.9+40.58*k,m=((k%5)+5)%5===0;s+=`<path d="M0 ${y}L1912 ${y-1912*.06156}" stroke="${m?'#323a4a':'#272e3a'}"/>`}
 for(let k=-6;k<14;k++){const y=228.500+58.500*k,m=((k%5)+5)%5===0;s+=`<path d="M0 ${y}L1912 ${y+1912*.12794}" stroke="${m?'#30374a':'#272e3a'}"/>`}
 s+='</g>';
 const D='#ab0000',R='#dd4a4a';
 const ball=(x,y,rx,ry)=>`<ellipse cx="${x}" cy="${y}" rx="${rx}" ry="${ry}" fill="url(#ball)"/>`;
 const spike=(x,y,x0,x1,yb)=>`<path d="M${x-.7} ${y}h1.400L${x1} ${yb}Q${(x0+x1)/2} ${yb+2} ${x0} ${yb}z" fill="url(#spk)"/>`;
 s+=`<path d="M962.500 368.300L985 366.500 1015 365.500 1040 367 1067.500 370.700 1012.400 375z" fill="#800000"/>`;
 s+=spike(1017.600,318,1014.500,1021,342)+ball(1017.600,305.300,9.500,10)+ball(1017.600,352.300,15,15);
 /* stepped roof edges */
 let lp='',rp='';const n=24;
 for(let i=0;i<=n;i++){const x=962.500-(182.500*i/n),y=368+45*i/n;lp+=`H${x.toFixed(1)}V${(y+1.900).toFixed(1)}`}
 for(let i=0;i<=n;i++){const x=1067.500+(182*i/n),y=371+55*i/n;rp+=`H${x.toFixed(1)}V${(y+2).toFixed(1)}`}
 s+=`<path d="M1012.400 374.300L972 368${lp}V419L786 423V430L793 433 797 436.500 998 462L1012 440z" fill="${D}"/>`;
 s+=`<path d="M1012.400 374.300L1067.500 370.700${rp}V431L1245 434 1247 440 1240 442 1239 447.500L1008 462.500 998 462 997.600 435z" fill="${R}"/>`;
 /* roof tile joints */
 for(let r=0;r<17;r++){const t=(r+.9)/17,y0=374.300+t*64,xl=1012.400-t*14.800,xr=1067.500+t*180,yr=370.700+t*55;
  for(let x=xl+3+(r%2)*5;x<xr-4;x+=10){const y=y0+(yr-y0)*(x-xl)/(xr-xl);s+=`<path d="M${x.toFixed(1)} ${y.toFixed(1)}h3.400" stroke="#a01010" stroke-width=".9"/>`}
  const xe=962.500-t*180,ye=368+t*46;
  for(let x=xe+5+(r%2)*4;x<xl-3;x+=7.500){const y=ye+(y0-ye)*(x-xe)/(xl-xe);s+=`<path d="M${x.toFixed(1)} ${y.toFixed(1)}h2.400" stroke="#860000" stroke-width=".9"/>`}}
 /* gallery: inner walls and walkway */
 s+=`<path d="M790.300 516L811 513.500 835 513.500 1008 533 1189 521 1215 524 1243.800 527.700 1000 542z" fill="#800000"/>`;
 s+=`<path d="M846 440L1008 460V538L846 521z" fill="${D}"/><path d="M1008 461L1188.700 449V527L1008 538z" fill="${R}"/>`;
 const col=(c,t,b,w=26,g='colL')=>{const x=760+c/2.904,y=280+t/3,h=(b-t)/3,W=w/2.904;s+=`<rect x="${(x-W/2).toFixed(1)}" y="${y}" width="${W.toFixed(1)}" height="${h}" fill="url(#${g})"/><path d="M${x-W/2-1.500} ${y+.5}h${W+2}v1.500h-${W}z" fill="${g=='colL'?'#c22':'#8a0505'}"/><path d="M${x-.6} ${y+h*.12}v${h*.28}M${x+1.800} ${y+h*.5}v${h*.35}" stroke="${g=='colL'?'#7d0c0c':'#7a0000'}" stroke-width=".8"/><rect x="${x-W/2-.3}" y="${y+h-2}" width="${W+.600}" height="2.500" fill="#b51515"/>`};
 col(205,478,702,22);col(1258,507,725,20,'colR');col(1317,503,735,20,'colR');
 [[120,466,706],[178,478,713],[237,487,722],[295,495,732],[353,503,740],[411,511,748],[469,518,755],[528,526,763],[587,533,770],[645,541,778],[705,548,783]].forEach(c=>col(...c));
 [[788,540,778],[871,535,773],[956,530,768],[1040,525,763],[1125,520,758],[1210,515,750],[1293,508,747],[1373,503,742]].forEach(c=>col(...c,25,'colR'));
 s+=`<path d="M790.300 516L1000 541.700V703L997.600 773.300 775.800 745V727.300H780V709H785V685.300H790.300z" fill="${D}"/>`;
 s+=`<path d="M1000 541.700L1243.800 527.700V696.700H1249V720.700H1253.800V739H1258V756.700L997.600 773.300 1000 703z" fill="${R}"/>`;
 s+=`<g stroke="#ff1212" fill="none"><path d="M785.500 424L997.600 450.900 1247 435.700M785.500 427.200L997.600 453.600 1247 438.400"/><path d="M997.600 758.300L1258 740V756.700L997.600 773.300zM998 762.300L1258 744.300M998 766L1258 748.300M998 769.700L1258 752.500"/></g>`;
 s+=spike(967.600,320,962.300,972.800,368)+spike(1062.700,322.500,1056.800,1068.200,370.700)+spike(1013,325,1007.200,1018.300,373.700);
 s+=ball(967.600,310,9.500,10)+ball(1062.300,312,9.500,10)+ball(1013,315.700,9.500,10);
 /* crosshair */
 s+=`<path d="M1247.500 330V435" stroke="#6c6cd8"/><path d="M1189 403.500L1276.500 400.300" stroke="#58c858" stroke-width="1.200"/><path d="M1207 396L1268 402.700" stroke="#d87070"/><rect x="1244.500" y="397.500" width="6" height="6" fill="#212830" stroke="#fff"/>`;
 /* UCS icon */
 s+=`<path d="M21 953.500L48 957.500 48 961 21 956.500z" fill="#b84a4a"/><rect x="47.500" y="909" width="5" height="50" fill="#5f8cd8"/><rect x="47.500" y="909" width="1.500" height="50" fill="#33559a"/><path d="M10 959.500L52.500 957.500V961.500L10 964.500z" fill="#57b057"/><path d="M10 962.500L52.500 960.200V961.500L10 964.500z" fill="#2f6f2f"/>
 <g font-family="Lato,sans-serif" font-weight="300" font-size="18"><text x="48.500" y="909.500" fill="#2266dd" textLength="13" lengthAdjust="spacingAndGlyphs">Z</text><text x="19" y="952.500" fill="#c02a2a" textLength="12" lengthAdjust="spacingAndGlyphs">X</text><text x="7" y="960.500" fill="#1fa01f" textLength="12" lengthAdjust="spacingAndGlyphs">Y</text></g>`;
 return s;
}
reg('cad-view',`<style>:host{display:flex;height:838px;position:relative;background:#212830;overflow:hidden}
.cv{display:block;flex:none}.edge{width:6px;background:linear-gradient(#b4cbe8,#e4eefa 90px,#b4cbe8 92px);border-right:1px solid #3cc8f0;margin-right:1px}
.lbl{position:absolute;left:3px;top:6px}cad-mdi{position:absolute;left:1848px;top:7px}view-cube{position:absolute;left:1760px;top:78px}nav-bar{position:absolute;left:1876px;top:236px}cad-cmd{position:absolute;left:384px;top:754px}</style>
<svg class="cv" width="1912" height="838" viewBox="0 173 1912 838"><defs><radialGradient id="ball" cx=".5" cy=".5" r=".55" fx=".6" fy=".45"><stop offset="0" stop-color="#f06060"/><stop offset=".35" stop-color="#cf1616"/><stop offset="1" stop-color="#880202"/></radialGradient>
<linearGradient id="spk"><stop offset="0" stop-color="#990808"/><stop offset=".5" stop-color="#d83030"/><stop offset="1" stop-color="#a80c0c"/></linearGradient>
<linearGradient id="colL"><stop offset="0" stop-color="#d63434"/><stop offset=".25" stop-color="#c01818"/><stop offset=".4" stop-color="#a00808"/><stop offset=".5" stop-color="#e04848"/><stop offset=".8" stop-color="#cf2828"/><stop offset="1" stop-color="#9c0a0a"/></linearGradient>
<linearGradient id="colR"><stop offset="0" stop-color="#8e0202"/><stop offset=".35" stop-color="#b80e0e"/><stop offset=".55" stop-color="#d63636"/><stop offset=".7" stop-color="#960202"/><stop offset="1" stop-color="#c41c1c"/></linearGradient></defs>${scene()}</svg>
<div class="edge"></div>
<ui-text class="lbl" w="141" style="color:#e4e4e4">[−][Custom View][Shaded]</ui-text><cad-mdi></cad-mdi><view-cube></view-cube><nav-bar></nav-bar><cad-cmd></cad-cmd>`);
reg('cad-mdi',`<style>:host{display:block;width:56px;height:16px}</style><svg width="56" height="16"><path d="M3 11h9.500" stroke="#fff" stroke-width="2.500"/><path d="M24 6h5.500v5.500h-5.500z" fill="none" stroke="#eee" stroke-width="2"/><path d="M26 3h6.500v6.500" fill="none" stroke="#eee" stroke-width="1.500"/><path d="M44 3.500l7 8M51 3.500l-7 8" stroke="#fff" stroke-width="2.300"/></svg>`);
reg('view-cube',`<style>:host{display:block;width:140px;height:134px}</style><svg width="140" height="134" viewBox="1760 251 140 134"><defs><linearGradient id="f" x2="0" y2="1"><stop offset="0" stop-color="#bababa"/><stop offset="1" stop-color="#949494"/></linearGradient></defs>
<ellipse cx="1829" cy="309" rx="59" ry="9.500" fill="none" stroke="#444b55" stroke-width="6"/><path d="M1763 309a66 12 0 0 0 132 0" fill="none" stroke="#545b65" stroke-width="1.500"/><ellipse cx="1824" cy="308" rx="30" ry="6" fill="#191d23"/>
<path d="M1763 313.500h17M1768 311l10 5M1855 316.500l24-1M1860 313l14 7M1868 301h14M1872 299l8 4M1791 299h6" stroke="#c0c0c0" stroke-width="1.400"/>
<path d="M1796.700 255.700H1822.300V307.700L1796.700 300z" fill="url(#f)"/><path d="M1822.300 255.700H1862.700V302.300L1822.300 307.700z" fill="url(#f)"/><path d="M1817 266h13v32h-13z" fill="#8d9aa6" opacity=".55"/><path d="M1822.300 255.700V307.700" stroke="#555"/>
<g font-weight="700" fill="#4a5058"><text textLength="15" lengthAdjust="spacingAndGlyphs" transform="translate(1801.500 284) skewY(7)" font-size="13">BACK</text><text textLength="19" lengthAdjust="spacingAndGlyphs" transform="translate(1833.500 286.500) skewY(-3)" font-size="13.500">LEFT</text></g>
<rect x="1805.500" y="366.500" width="47" height="17" rx="3" fill="#999ba8" stroke="#b9bac4"/><text x="1809" y="378.500" font-family="Liberation Sans" font-size="11" textLength="24" lengthAdjust="spacingAndGlyphs" fill="#5a5c66">WCS</text><path d="M1839.500 373h8l-4 3.500z" fill="none" stroke="#b4b5bf"/></svg>`);
reg('nav-bar',`<style>:host{display:block;width:32px;height:212px;background:rgba(118,121,122,.68);border-radius:3px}</style><svg width="32" height="212" fill="none" stroke="#4a4e53" stroke-width="1.200"><circle cx="26" cy="5" r="3.500"/><path d="M24.500 3.500l3 3M27.500 3.500l-3 3M5.500 30.500q0-10 11-10h9.500v10q0 11-10.500 11t-10-11z"/><circle cx="16" cy="31" r="5.500"/><path d="M3 57h26M3 165h26" stroke="#6f7375"/>
<g fill="#2e3236" stroke="none"><path d="M13.500 49.500h5l-2.500 3zM13.500 119.500h5l-2.500 3zM13.500 157.500h5l-2.500 3z"/></g>
<path d="M10 83q-3-7-5-10l2-1 4 5-2-12 2-1 3 9V62h2.500v11l2-10h2.500l-1 12 3-6 2 1-4 12-3 4h-7z"/><path d="M5 91l14 13M19 90L5 104M5 94v-4h4M15 90h4v4M5 101v4h4"/><circle cx="21" cy="105" r="4.500"/><path d="M24 109l4 4" stroke-width="3"/><path d="M14 148v-14h-3l4.500-6 4.500 6h-3v14z"/><path d="M12 137q-7 1-7 4 0 4 10.500 4t10.500-4q0-3-7-4M12 139l-4 3 4 3" /><path d="M4.500 170.500h6v6h-6zM12.500 170.500h6v6h-6zM20.500 170.500h6v6h-6zM4.500 179.500h16v13h-16z"/><path d="M9 182l7 4-7 4z" fill="#33373b"/><circle cx="26" cy="206" r="3.500"/><path d="M24 206h4"/></svg>`);
reg('cad-cmd',`<style>:host{display:flex;flex-direction:column;width:1152px}
.h{align-self:flex-start;margin-left:60px;width:60px;height:15px;margin-bottom:5px;background:#545557;border-radius:2px;display:flex;align-items:center;justify-content:center}ui-text{font-family:"DejaVu Sans Mono",monospace;font-size:11px}
.bar{display:flex;height:27px;margin-top:-3px;border:1px solid #777;box-sizing:border-box}.l{width:53px;background:linear-gradient(#5f5f5f,#444)}.i{flex:1;background:linear-gradient(#c6c7c9,#bcbdbf);display:flex;align-items:center;color:#6e6e6e;font-style:italic;padding:0 1px 0 4px}.i>ui-arrow:last-child{margin-left:auto;transform:rotate(180deg)}</style>
<span class="h" style="color:#b8b8b8"><ui-text w="56">Command:</ui-text></span><span class="h" style="color:#d6d6d6"><ui-text w="56">Command:</ui-text></span><span class="h" style="color:#fff"><ui-text w="56">Command:</ui-text></span>
<div class="bar"><div class="l"><svg width="53" height="25"><path d="M4.500 4v17M7.500 4v17" stroke="#aaa" stroke-dasharray="2 1" stroke-width="1.500"/><path d="M15.500 8.500l7 8M22.500 8.500l-7 8" stroke="#ddd" stroke-width="1.800"/><path d="M39 11l8 8" stroke="#222" stroke-width="4"/><path d="M38 10.500l8 8" stroke="#d8dade" stroke-width="2.800"/><path d="M36 6.500a4.200 4.200 0 1 0 6 2l-2.500 2.200-3-1.500z" fill="#d8dade"/></svg></div><div class="i"><svg width="16" height="16"><rect x="1" y="1" width="14" height="13" rx="1.500" fill="#b7c1d0" stroke="#7f8b9c"/><path d="M4 4l3.500 3.500L4 11M8 11.500h4" fill="none" stroke="#222" stroke-width="1.200"/></svg><ui-arrow c="#555"></ui-arrow><ui-text w="97" style="margin-left:6px">Type a command</ui-text><ui-arrow s="7" c="#222"></ui-arrow></div></div>`);
const bx=(l,r,items)=>X(l,r-l,`<span class="bx">${row(l,items)}</span>`);
reg('cad-status',`<style>:host{display:flex;height:29px;background:#383838;border-top:1px solid #5a5a5a;box-sizing:border-box}${ROW}
.tabs{display:flex;width:1310px;box-sizing:border-box;padding-left:11px;color:#c8c8c8;align-items:flex-start}.t{height:18px;box-sizing:border-box;display:flex;align-items:center;justify-content:center;background:linear-gradient(#4c4c4c,#646464);clip-path:polygon(0 0,100% 0,calc(100% - 7px) 80%,calc(100% - 11px) 100%,11px 100%,7px 80%)}.t ui-text{margin-top:-2px}.on{background:linear-gradient(#777,#8e8e8e);color:#fff;font-weight:700}
.bx{display:block;width:100%;box-sizing:border-box;height:27px;border:1px solid #808080;background:#4f4f4f}.bx .row{margin-left:-1px}.row{height:28px}.bx .row{height:24px}</style>
<div class="tabs"><span class="t on" style="width:58px"><ui-text w="35">Model</ui-text></span><span class="t" style="width:65px"><ui-text w="41">Layout1</ui-text></span><span class="t" style="width:66px"><ui-text w="42">Layout2</ui-text></span><span class="t" style="width:24px;margin-left:3px;height:17px"><svg width="9" height="9"><path d="M4.500 0v9M0 4.500h9" stroke="#ccc" stroke-width="1.800"/></svg></span></div>
${row(1310,[bx(1311,1360,[T('MODEL',1315,41)]),bx(1361,1426,[I('s1',1374),I('s2',1398),A(1417,7)]),bx(1427,1531,[I('s3',1440),I('s4',1464),A(1483,7),I('s5',1503),A(1522,7)]),bx(1530,1595,[I('s6',1543),I('s7',1567),A(1586,7)]),bx(1596,1703,[I('s8',1609),I('s9',1633),I('s10',1657),T('1:1',1673.5,13),A(1695,7)]),bx(1704,1745,[I('s11',1717),A(1736.500,7)]),bx(1744,1770,[I('s12',1757)]),bx(1771,1797,[I('s13',1783)]),bx(1798,1824,[I('s14',1811)]),bx(1825,1868,[I('s15',1837,20),I('s16',1856,20)]),bx(1869,1919,[I('s17',1882),I('s18',1906)])])}`);
reg('win-taskbar',`<style>:host{display:flex;height:40px;background:#070707;color:#fff}${ROW}.row{height:40px}
.b{display:flex;align-items:center;justify-content:center;height:38px;width:100%;border-bottom:2px solid #76b9ed}.on{background:#3b3b3b}.cl{display:flex;flex-direction:column;align-items:center;gap:2px}</style>
${row(0,[I('win',24),I('search',72),I('task',120),
X(151,40,`<span class="b"><svg width="24" height="22"><path d="M1 2h8l2 2h11v16H1z" fill="#f8d775"/><path d="M1 6h21v14H1z" fill="#fce79c"/><path d="M5 21v-9h13v9h-4v-5H9v5z" fill="#35a3dd"/><path d="M2 2.500h4" stroke="#fff"/></svg></span>`),
X(200,40,`<span class="b"><svg width="24" height="24"><circle cx="12" cy="12" r="11.300" fill="#fbc93a"/><path d="M2.200 6.400A11.300 11.300 0 0 1 21.800 6.400L12 6.800z" fill="#dd4b3e"/><path d="M2.200 6.400A11.300 11.300 0 0 0 11 23.300L16.500 14.500 12 12z" fill="#22a05a"/><path d="M2.200 6.400L7.500 15 12 7h9.800A11.300 11.300 0 0 0 2.200 6.400z" fill="#dd4b3e"/><circle cx="12" cy="12" r="5.200" fill="#fff"/><circle cx="12" cy="12" r="4.200" fill="#4587f0"/></svg></span>`),
X(245,48,`<span class="b on"><svg width="24" height="24" style="--hole:#f6e9e4"><rect width="24" height="24" fill="#f6e9e4"/><g transform="translate(3 2.500) scale(.78)">${LOGO}</g></svg></span>`),
I('people',1621),I('shield',1657),I('steam',1681),I('java',1705),I('net',1729),I('vol',1753),T('TUR',1772,22),
X(1807,54,'<span class="cl"><ui-text w="26">19:01</ui-text><ui-text w="54">22.12.2018</ui-text></span>'),I('notif',1887),X(1915,1,'<i style="width:1px;height:40px;background:#555"></i>')])}`);
reg('ui-icon',e=>`<style>:host{display:inline-flex;flex:none;width:24px;height:24px;justify-content:center}svg{flex:none;width:24px;height:24px;display:block}</style><svg viewBox="0 0 24 24">${ICONS[a(e,'n')]}</svg>`);
reg('ui-arrow',e=>{const s=+a(e,'s',5),h=Math.ceil(s/2);return `<style>:host{display:inline-flex;flex:none;width:10px;align-items:center;justify-content:center}svg{display:block;flex:none}</style><svg width="${s}" height="${h}"><path d="M0 0h${s}l-${s/2} ${h}z" fill="${a(e,'c','#fff')}"/></svg>`});
/* label condensed or widened to the given width */
reg('ui-text',e=>`<style>:host{display:inline-block;flex:none;width:${a(e,'w')}px;height:16px;line-height:16px;white-space:pre}span{display:inline-block;transform-origin:0 50%;white-space:pre}</style><span><slot></slot></span>`,e=>{const s=e.shadowRoot.querySelector('span'),n=s.offsetWidth;if(n)s.style.transform=`scaleX(${(+a(e,'w')/n).toFixed(4)})`});
</script>
</body>
</html>
